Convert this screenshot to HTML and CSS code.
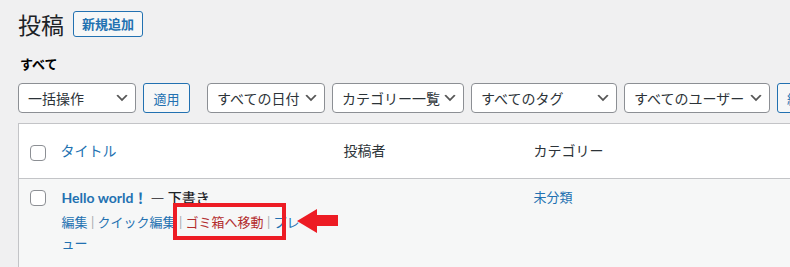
FILE: index.html
```html
<!DOCTYPE html>
<html lang="ja">
<head>
    <meta charset="UTF-8">
    <meta name="viewport" content="width=device-width, initial-scale=1.0">
    <title>投稿</title>
    <link rel="stylesheet" href="styles.css">
</head>
<body>
    <div class="wrap">
        <div class="title-row">
            <h1>投稿</h1>
            <a class="add-new" href="#">新規追加</a>
        </div>

        <div class="views">すべて</div>

        <div class="filters">
            <div class="select w-bulk">
                <span>一括操作</span>
                <svg viewBox="0 0 20 20"><path d="M5 6l5 5 5-5 2 1-7 7-7-7 2-1z"/></svg>
            </div>
            <button class="btn w-apply">適用</button>

            <div class="select w-date gap-left">
                <span>すべての日付</span>
                <svg viewBox="0 0 20 20"><path d="M5 6l5 5 5-5 2 1-7 7-7-7 2-1z"/></svg>
            </div>
            <div class="select w-cat">
                <span>カテゴリー一覧</span>
                <svg viewBox="0 0 20 20"><path d="M5 6l5 5 5-5 2 1-7 7-7-7 2-1z"/></svg>
            </div>
            <div class="select w-tag">
                <span>すべてのタグ</span>
                <svg viewBox="0 0 20 20"><path d="M5 6l5 5 5-5 2 1-7 7-7-7 2-1z"/></svg>
            </div>
            <div class="select w-user">
                <span>すべてのユーザー</span>
                <svg viewBox="0 0 20 20"><path d="M5 6l5 5 5-5 2 1-7 7-7-7 2-1z"/></svg>
            </div>
            <button class="btn">絞り込み</button>
        </div>

        <table class="posts">
            <thead>
                <tr>
                    <td class="col-cb"><input type="checkbox"></td>
                    <th class="col-title"><a href="#">タイトル</a></th>
                    <th class="col-author">投稿者</th>
                    <th class="col-cat">カテゴリー</th>
                </tr>
            </thead>
            <tbody>
                <tr>
                    <td class="col-cb"><input type="checkbox"></td>
                    <td class="col-title">
                        <div class="row-title"><a href="#">Hello world！</a><span class="post-state"> — 下書き</span></div>
                        <div class="row-actions"><a href="#">編集</a><span class="sep">|</span><a href="#">クイック編集</a><span class="sep">|</span><a href="#" class="trash">ゴミ箱へ移動</a><span class="sep">|</span><a href="#">プレビュー</a></div>
                        <!-- annotation overlay -->
                        <span class="mark-box"></span>
                        <svg class="mark-arrow" viewBox="0 0 41 24">
                            <rect class="halo" x="4" y="2" width="17" height="20"/>
                            <polygon points="0,12 20,0 20,6 41,6 41,17 20,17 20,24"/>
                        </svg>
                    </td>
                    <td class="col-author"></td>
                    <td class="col-cat"><a href="#">未分類</a></td>
                </tr>
            </tbody>
        </table>
    </div>
</body>
</html>
```

FILE: styles.css
```css
html, body {
    overflow: hidden;
}
body {
    margin: 0;
    background: #f0f0f1;
    color: #2c3338;
    font-family: "Lato", "Noto Sans CJK JP", sans-serif;
    font-size: 13px;
}
a {
    color: #2271b1;
    text-decoration: none;
}
.wrap {
    width: 1100px;
    padding: 10px 0 0 18px;
}
.title-row {
    display: flex;
    align-items: center;
    gap: 9px;
}
h1 {
    margin: 0;
    font-size: 23px;
    font-weight: 400;
    line-height: 30px;
    color: #1d2327;
}
.add-new {
    display: inline-block;
    height: 26px;
    box-sizing: border-box;
    padding: 0 8px;
    border: 1px solid #2271b1;
    border-radius: 3px;
    background: #f6f7f7;
    font-size: 13px;
    font-weight: 700;
    line-height: 24px;
    margin-top: -2px;
}
.views {
    margin: 14px 0 0 2px;
    font-weight: 700;
    line-height: 20px;
    color: #000;
}
.filters {
    display: flex;
    gap: 7px;
    margin-top: 9px;
}
.select {
    display: flex;
    align-items: center;
    justify-content: space-between;
    height: 30px;
    box-sizing: border-box;
    padding: 0 5px 0 9px;
    border: 1px solid #8c8f94;
    border-radius: 4px;
    background: #fff;
    font-size: 14px;
    color: #2c3338;
    white-space: nowrap;
}
.select svg {
    width: 16px;
    height: 16px;
    fill: #555;
    flex: none;
}
.w-bulk { width: 118px; }
.w-date { width: 118px; }
.w-cat { width: 132px; }
.w-tag { width: 146px; }
.w-user { width: 146px; }
.gap-left {
    margin-left: 10px;
}
.btn {
    height: 30px;
    padding: 0 9px;
    border: 1px solid #2271b1;
    border-radius: 3px;
    background: #f6f7f7;
    color: #2271b1;
    font-family: inherit;
    font-size: 13px;
}
.w-apply {
    width: 47px;
    padding: 0;
}
.posts {
    margin-top: 10px;
    width: 1060px;
    border-collapse: collapse;
    border: 1px solid #c3c4c7;
    table-layout: fixed;
}
.posts th {
    text-align: left;
    font-weight: 400;
    font-size: 14px;
}
.posts thead tr {
    background: #fff;
    border-bottom: 1px solid #c3c4c7;
}
.posts thead th,
.posts thead td {
    height: 55px;
    box-sizing: border-box;
    padding: 0 10px;
    vertical-align: middle;
    line-height: 20px;
}
.posts thead .col-cb {
    padding-top: 3px;
}
.posts thead .col-title {
    padding-left: 9px;
}
.posts tbody tr {
    background: #f6f7f7;
}
.posts tbody td {
    padding: 8px 10px 14px;
    vertical-align: top;
    height: 88px;
}
.col-cb {
    width: 33px;
    box-sizing: border-box;
}
.posts .col-cb {
    padding-left: 11px;
    padding-right: 0;
}
.posts tbody .col-cb {
    padding-top: 11px;
}
.col-title { width: 282px; }
.col-author { width: 190px; }
.col-author, .posts th.col-author { color: #2c3338; }

input[type="checkbox"] {
    appearance: none;
    -webkit-appearance: none;
    display: block;
    width: 16px;
    height: 16px;
    margin: 0;
    border: 1px solid #8c8f94;
    border-radius: 4px;
    background: #fff;
}
.posts tbody .col-title {
    position: relative;
}
.row-title {
    font-size: 14px;
    font-weight: 700;
    line-height: 20px;
    color: #1d2327;
}
.post-state {
    font-family: "Noto Sans CJK JP", sans-serif;
    font-weight: 500;
}
.row-actions {
    margin-top: 4px;
    padding-right: 6px;
    line-height: 21px;
    font-size: 13px;
}
.sep {
    display: inline-block;
    width: 10px;
    text-align: center;
    color: #a7aaad;
}
.trash {
    color: #b32d2e;
}
.col-cat a {
    font-size: 13px;
    line-height: 20px;
}
.mark-box {
    position: absolute;
    left: 121px;
    top: 24px;
    width: 113px;
    height: 37px;
    box-sizing: border-box;
    border: 4px solid #ed1c24;
}
.mark-arrow {
    position: absolute;
    left: 245px;
    top: 30px;
    width: 41px;
    height: 24px;
    fill: #ed1c24;
}
.mark-arrow .halo {
    fill: #f6f7f7;
}
```
